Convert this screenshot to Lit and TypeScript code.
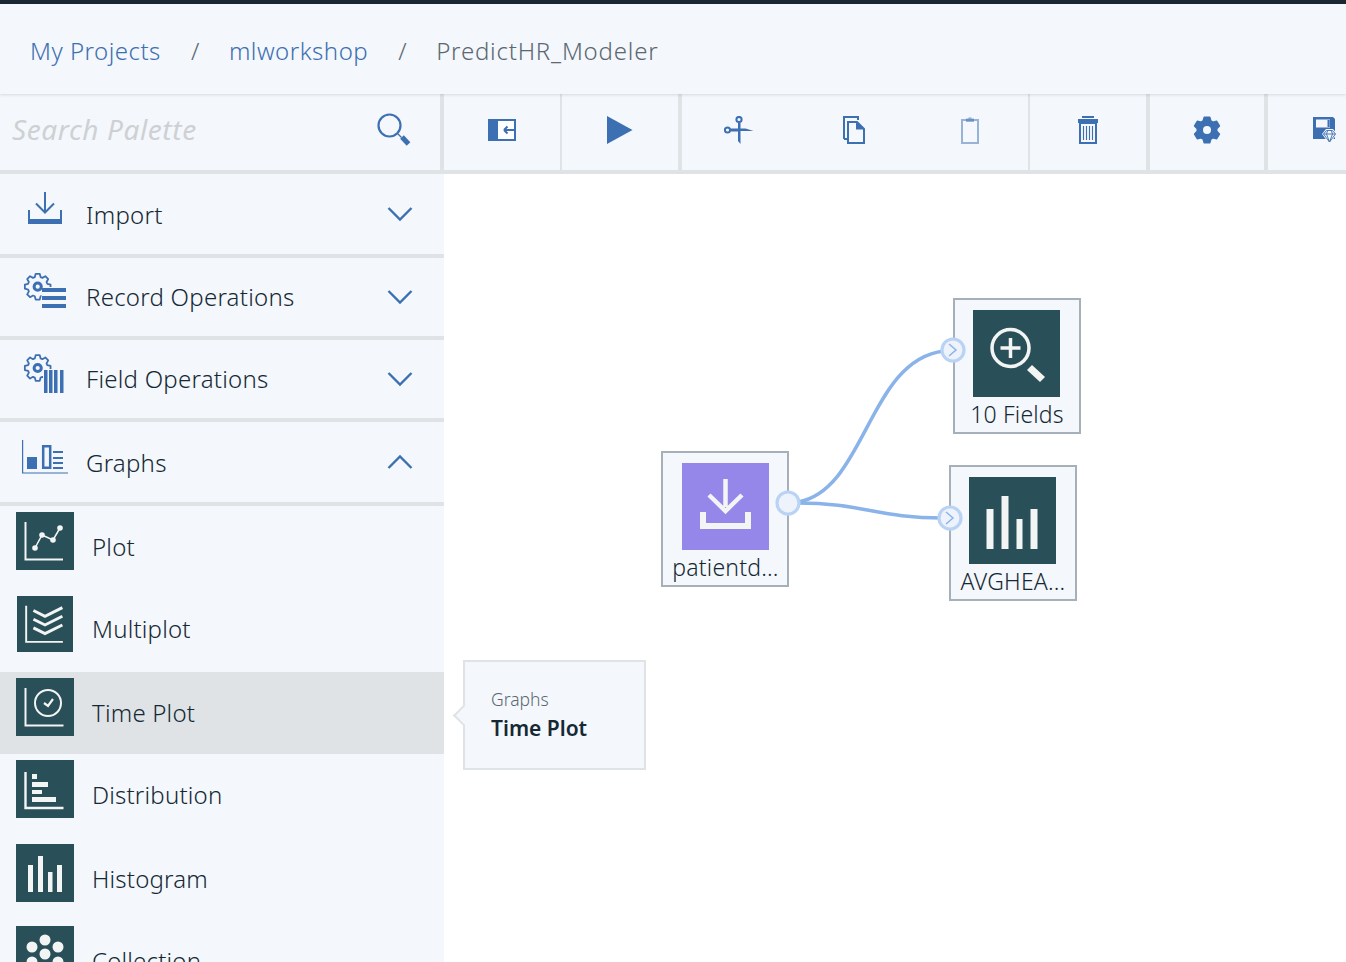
import { LitElement, html, svg, css } from 'lit';
import { customElement } from 'lit/decorators.js';

const BLUE = '#3d70b2';
const PAPER = '#f4f7fb';
const INK = '#f3f4f4';

/* gear outline as a path, used by the palette and the toolbar */
function gearPath(cx: number, cy: number, ro: number, ri: number, teeth: number) {
    const pts: string[] = [];
    const step = (Math.PI * 2) / teeth;
    for (let i = 0; i < teeth; i++) {
        const a = i * step - Math.PI / 2;
        const p = (r: number, d: number) =>
            `${(cx + r * Math.cos(a + d * step)).toFixed(2)} ${(cy + r * Math.sin(a + d * step)).toFixed(2)}`;
        pts.push(p(ri, -0.38), p(ro, -0.2), p(ro, 0.2), p(ri, 0.38));
    }
    return 'M' + pts.join('L') + 'Z';
}

const i = (w: number, h: number, body: unknown) =>
    html`<svg width=${w} height=${h} viewBox="0 0 ${w} ${h}" fill="none">${body}</svg>`;

const ICONS: Record<string, () => unknown> = {
    search: () => i(36, 36, svg`
        <circle cx="12.500" cy="13.500" r="11" stroke=${BLUE} stroke-width="2.200"/>
        <path d="M20.500 21.500l4 4" stroke=${BLUE} stroke-width="1.300"/>
        <path d="M25 25l6.500 7" stroke=${BLUE} stroke-width="5"/>`),
    collapse: () => i(28, 22, svg`
        <path d="M1 1h26v20H1z" fill="#fff" stroke=${BLUE} stroke-width="2"/>
        <path d="M0 0h10v22H0z" fill=${BLUE}/>
        <path d="M16 11h10M16 11l3.500-3.500M16 11l3.500 3.500" stroke=${BLUE} stroke-width="2"/>`),
    play: () => i(26, 28, svg`<path d="M0 0l25.500 14L0 28z" fill=${BLUE}/>`),
    cut: () => i(30, 28, svg`
        <circle cx="15" cy="3.500" r="2.600" stroke=${BLUE} stroke-width="2"/>
        <circle cx="3.500" cy="14" r="2.600" stroke=${BLUE} stroke-width="2"/>
        <path d="M14 6.500h2.500v6h5l8 2.500H16.500V28L14 25V15.500H6.500v-3H14z" fill=${BLUE}/>`),
    copy: () => i(22, 28, svg`
        <path d="M1 23V1h14v3" stroke=${BLUE} stroke-width="2"/>
        <path d="M1 23h3" stroke=${BLUE} stroke-width="2"/>
        <path d="M5 6h9l7 7v14H5z" fill=${PAPER} stroke=${BLUE} stroke-width="2"/>
        <path d="M13 5l9 8.500h-9z" fill=${BLUE}/>`),
    paste: () => i(18, 28, svg`
        <path d="M1 4h16v23H1z" stroke=${BLUE} stroke-width="2" opacity=".5"/>
        <path d="M5 6V2.500h2A2.300 2.300 0 0 1 11 2.500h2V6z" fill=${BLUE} opacity=".5"/>`),
    trash: () => i(20, 28, svg`
        <path d="M4 0h12v2H4z" fill=${BLUE}/>
        <path d="M0 3h20v4H0z" fill=${BLUE}/>
        <path d="M2 7h16v20H2z" fill=${PAPER} stroke=${BLUE} stroke-width="2"/>
        <path d="M5.500 10v14M8.500 10v14M11.500 10v14M14.500 10v14" stroke=${BLUE} stroke-width="1.100"/>`),
    gear: () => i(28, 28, svg`
        <path d=${gearPath(14, 14, 13, 9.800, 6)} fill=${BLUE} stroke=${BLUE} stroke-width="1.600" stroke-linejoin="round"/>
        <circle cx="14" cy="14" r="4" fill=${PAPER}/>`),
    save: () => i(24, 27, svg`
        <path d="M0 0h20l2 2v20H0z" fill=${BLUE}/>
        <path d="M3 2.500h14v8H3z" fill=${PAPER}/>
        <path d="M14.500 3h2.200v7h-2.200z" fill=${BLUE}/>
        <path d="M9 17l4-5h7l4 5-7.500 10z" fill=${PAPER}/>
        <path d="M10.500 17l3-3.500h6l3 3.500-6 8zM10.500 17h12M14.500 14l-1 3 3 8 3-8-1-3" stroke=${BLUE} stroke-width=".9"/>`),
    import: () => i(42, 38, svg`<g transform="translate(6 4)">
        <path d="M17 0v20M8 11.500l9 9 9-9" stroke=${BLUE} stroke-width="2"/>
        <path d="M1 18v10M33 18v10" stroke=${BLUE} stroke-width="2"/>
        <path d="M0 27h34v5H0z" fill=${BLUE}/></g>`),
    record: () => i(46, 40, svg`
        <path d=${gearPath(15.700, 14.700, 13, 10, 8)} stroke=${BLUE} stroke-width="1.800" stroke-linejoin="round"/>
        <path d="M19.500 15h25v23h-25z" fill=${PAPER}/>
        <circle cx="15.700" cy="14.700" r="3.600" stroke=${BLUE} stroke-width="3"/>
        <path d="M20 16h24v4H20zM20 24h24v4H20zM20 32h24v4H20z" fill=${BLUE}/>`),
    field: () => i(46, 42, svg`
        <path d=${gearPath(15.700, 14, 13, 10, 8)} stroke=${BLUE} stroke-width="1.800" stroke-linejoin="round"/>
        <path d="M21 15h22v25H21z" fill=${PAPER}/>
        <circle cx="15.700" cy="14" r="3.600" stroke=${BLUE} stroke-width="3"/>
        <path d="M22 16h3.500v23H22zM27 16h3.500v23H27zM32 16h3.500v23H32zM38 16h3.500v23H38z" fill=${BLUE}/>`),
    graphs: () => i(48, 40, svg`
        <path d="M.6 4v33H46" stroke=${BLUE} stroke-width="1.200"/>
        <path d="M5 21h10v12H5z" fill=${BLUE}/>
        <path d="M21.200 10.200h7v21.600h-7z" stroke=${BLUE} stroke-width="2.500"/>
        <path d="M31 16h10M31 22h10M31 27h10M31 32h10" stroke=${BLUE} stroke-width="1.800"/>`),
    plot: () => svg`
        <path d="M9.500 10v37.500h37.500" stroke=${INK} stroke-width="2"/>
        <path d="M19 36l7-13 11 5 7-12" stroke=${INK} stroke-width="1.500"/>
        <circle cx="19" cy="36" r="2.800" fill=${INK}/><circle cx="26" cy="23" r="2.800" fill=${INK}/>
        <circle cx="37" cy="28" r="2.800" fill=${INK}/><circle cx="44" cy="16" r="2.800" fill=${INK}/>`,
    multiplot: () => svg`
        <path d="M9.500 10v37.500h38" stroke=${INK} stroke-width="2"/>
        <path d="M17 15l12 6 18-9M17 24l12 6 18-9M17 33l12 6 18-9" stroke=${INK} stroke-width="3"/>`,
    timeplot: () => svg`
        <path d="M9.500 10v37.500h38" stroke=${INK} stroke-width="2"/>
        <circle cx="32" cy="25" r="13" stroke=${INK} stroke-width="2"/>
        <path d="M28 25l4 3 5-7" stroke=${INK} stroke-width="2.200"/>`,
    distribution: () => svg`
        <path d="M9.500 12v36h38" stroke=${INK} stroke-width="2.400"/>
        <path d="M16 14h5v5h-5zM16 22h16v5H16zM16 30h10v4H16zM16 37h24v5H16z" fill=${INK}/>`,
    histogram: () => svg`
        <path d="M12 21h5v27h-5zM22 12h5v36h-5zM32 28h4.500v20H32zM41 21h5v27h-5z" fill=${INK}/>`,
    collection: () => svg`
        <circle cx="29" cy="14" r="5.500" fill=${INK}/><circle cx="16" cy="21" r="5.500" fill=${INK}/>
        <circle cx="42" cy="21" r="5.500" fill=${INK}/><circle cx="29" cy="28" r="5.500" fill=${INK}/>
        <circle cx="16" cy="36" r="5.500" fill=${INK}/><circle cx="42" cy="36" r="5.500" fill=${INK}/>
        <circle cx="29" cy="43" r="5.500" fill=${INK}/>`,
};

const NODE_ICONS: Record<string, () => unknown> = {
    import: () => svg`
        <path d="M43.500 16v28M27 32l16.500 16L60 32" stroke=${INK} stroke-width="4.500" fill="none"/>
        <path d="M18 49h6v11h39V49h6v17H18z" fill=${INK}/>`,
    zoom: () => svg`
        <circle cx="37.500" cy="38" r="18.500" stroke=${INK} stroke-width="3.500" fill="none"/>
        <path d="M37.500 28v20M27.500 38h20" stroke=${INK} stroke-width="3.500"/>
        <path d="M54 60l5-5 13 12-5 5z" fill=${INK}/>`,
    bars: () => svg`
        <path d="M17.500 32h7v40h-7zM32.500 19h7v53h-7zM47.500 42h6v30h-6zM61.500 32h7v40h-7z" fill=${INK}/>`,
};

const TOOLS = [
    { icons: ['collapse'], thick: false },
    { icons: ['play'], thick: true },
    { icons: ['cut', 'copy', 'paste'], thick: false },
    { icons: ['trash'], thick: true },
    { icons: ['gear'], thick: true },
    { icons: ['save'], thick: false },
];

const CATEGORIES = [
    { label: 'Import', icon: 'import', open: false, tall: true },
    { label: 'Record Operations', icon: 'record', open: false, tall: false },
    { label: 'Field Operations', icon: 'field', open: false, tall: false },
    { label: 'Graphs', icon: 'graphs', open: true, tall: true },
];

const ITEMS = [
    { label: 'Plot', icon: 'plot' },
    { label: 'Multiplot', icon: 'multiplot', small: true },
    { label: 'Time Plot', icon: 'timeplot', active: true },
    { label: 'Distribution', icon: 'distribution' },
    { label: 'Histogram', icon: 'histogram' },
    { label: 'Collection', icon: 'collection' },
];

/* x/y are the node's place on the canvas, relative to the page */
const NODES = [
    { x: 661, y: 451, label: 'patientd...', icon: 'import', cls: 'source' },
    { x: 953, y: 298, label: '10 Fields', icon: 'zoom', cls: '' },
    { x: 949, y: 465, label: 'AVGHEA...', icon: 'bars', cls: '' },
];

@customElement('app-root')
export class AppRoot extends LitElement {
    static styles = css`
        :host {
            display: block;
            height: 100vh;
            overflow: hidden;
            background: #fff;
            color: #152935;
            font-family: 'Noto Sans', 'Liberation Sans', sans-serif;
        }
        .shell { position: relative; height: 962px; overflow: hidden; }
        .topline { height: 4px; background: #1b2834; }
        .crumbs {
            height: 90px;
            box-sizing: border-box;
            padding: 2px 0 0 30px;
            display: flex;
            align-items: center;
            gap: 30px;
            background: #f4f7fb;
            font-size: 24px;
            font-weight: 300;
            letter-spacing: .5px;
            position: relative;
            z-index: 2;
            box-shadow: 0 1px 3px rgba(0, 0, 0, .12);
        }
        .crumbs a { color: #3d70b2; }
        .crumbs .sep { color: #5a6872; width: 8px; text-align: center; }
        .crumbs .here { color: #5a6872; letter-spacing: .8px; }
        .main { display: flex; height: 868px; }
        .palette { width: 444px; flex: none; background: #f4f7fb; }
        .search {
            height: 80px;
            box-sizing: border-box;
            display: flex;
            align-items: center;
            justify-content: space-between;
            padding: 0 27px 4px 12px;
            border-right: 4px solid #dfe3e6;
            border-bottom: 4px solid #dfe3e6;
        }
        .search span { font-style: italic; font-size: 28px; letter-spacing: .6px; color: #cdd1d4; margin-top: -2px; }
        .search svg { display: block; }
        .cat {
            height: 78px;
            border-bottom: 4px solid #dfe3e6;
            display: flex;
            align-items: center;
            position: relative;
            padding-left: 86px;
            font-size: 24px;
            font-weight: 300;
            letter-spacing: .25px;
        }
        .cat.tall { height: 80px; }
        .cat .cat-icon { position: absolute; left: 22px; top: 14px; }
        .cat span { margin-top: -1px; }
        .cat.tall span { margin-top: 1px; }
        .chev { position: absolute; left: 387px; top: 50%; margin-top: -8px; }
        .item {
            height: 82px;
            display: flex;
            align-items: center;
            padding-left: 16px;
            gap: 18px;
            font-size: 24px;
            font-weight: 300;
            letter-spacing: .2px;
        }
        .item:nth-child(even) { margin-bottom: 2px; }
        .item.active { background: #dfe3e6; }
        .thumb { align-self: flex-start; margin-top: 6px; width: 58px; height: 58px; background: #294f58; display: block; }
        .item.small .thumb { width: 56px; height: 56px; margin: 8px 1px 0; }
        .item span { margin-top: -1px; }
        .right { flex: 1; min-width: 0; position: relative; }
        .tools {
            height: 80px;
            box-sizing: border-box;
            display: grid;
            grid-template-columns: 118px 120px 348px 120px 118px 116px;
            background: #f4f7fb;
            border-bottom: 4px solid #dfe3e6;
        }
        .group {
            display: grid;
            grid-auto-flow: column;
            grid-auto-columns: 1fr;
            border-right: 2px solid #dfe3e6;
        }
        .group.thick { border-right-width: 4px; }
        .group:nth-child(3) { grid-template-columns: 114px 116px 1fr; }
        .tool { display: flex; align-items: center; justify-content: center; padding-bottom: 4px; }
        .tool svg { display: block; }
        .wires { position: absolute; left: 0; top: 0; width: 1346px; height: 962px; pointer-events: none; }
        .node {
            position: absolute;
            width: 128px;
            height: 136px;
            box-sizing: border-box;
            background: #f4f7fb;
            border: 2px solid #a5b0b8;
            display: flex;
            flex-direction: column;
            align-items: flex-start;
            padding: 10px 0 0 18px;
            font-size: 23px;
            font-weight: 300;
            line-height: 34px;
        }
        .node.source { padding-left: 19px; }
        .node span { align-self: center; margin-left: -18px; letter-spacing: .2px; white-space: nowrap; }
        .node svg { display: block; background: #294f58; flex: none; }
        .node.source svg { background: #9586ea; }
        .tip {
            position: absolute;
            left: 463px;
            top: 660px;
            width: 183px;
            height: 110px;
            box-sizing: border-box;
            border: 2px solid #dfe3e6;
            background: #f4f7fb;
            padding: 25px 0 0 26px;
        }
        .tip::before {
            content: '';
            position: absolute;
            left: -9px;
            top: 46px;
            width: 15px;
            height: 15px;
            background: #f4f7fb;
            border-left: 2px solid #dfe3e6;
            border-bottom: 2px solid #dfe3e6;
            transform: rotate(45deg);
            box-sizing: border-box;
        }
        .tip .kind { font-size: 17.500px; line-height: 25px; color: #5a6872; font-weight: 300; }
        .tip .name { font-size: 21px; line-height: 32px; font-weight: 600; color: #152935; }
    `;

    render() {
        return html`
            <div class="shell">
                <div class="topline"></div>
                <div class="crumbs">
                    <a>My Projects</a><span class="sep">/</span>
                    <a>mlworkshop</a><span class="sep">/</span>
                    <span class="here">PredictHR_Modeler</span>
                </div>
                <div class="main">
                    <div class="palette">
                        <div class="search"><span>Search Palette</span>${ICONS.search()}</div>
                        ${CATEGORIES.map((c) => this._renderCategory(c))}
                        <div>${ITEMS.map((it) => this._renderItem(it))}</div>
                    </div>
                    <div class="right">
                        <div class="tools">
                            ${TOOLS.map((g) => html`
                                <div class="group ${g.thick ? 'thick' : ''}">
                                    ${g.icons.map((t) => html`<div class="tool">${ICONS[t]()}</div>`)}
                                </div>`)}
                        </div>
                    </div>
                </div>
                ${this._renderWires()}
                ${NODES.map((n) => html`
                    <div class="node ${n.cls}" style="left:${n.x}px;top:${n.y}px">
                        ${i(87, 87, NODE_ICONS[n.icon]())}
                        <span>${n.label}</span>
                    </div>`)}
                ${this._renderPorts()}
                <div class="tip">
                    <div class="kind">Graphs</div>
                    <div class="name">Time Plot</div>
                </div>
            </div>
        `;
    }

    _renderCategory(c: { label: string; icon: string; open: boolean; tall: boolean }) {
        return html`
            <div class="cat ${c.tall ? 'tall' : ''}">
                <div class="cat-icon">${ICONS[c.icon]()}</div>
                <span>${c.label}</span>
                <svg class="chev" width="26" height="16" viewBox="0 0 26 16" fill="none">
                    <path d=${c.open ? 'M1.500 14L13 2.500 24.500 14' : 'M1.500 2L13 13.500 24.500 2'} stroke=${BLUE} stroke-width="2.400"/>
                </svg>
            </div>`;
    }

    _renderItem(it: { label: string; icon: string; small?: boolean; active?: boolean }) {
        return html`
            <div class="item ${it.small ? 'small' : ''} ${it.active ? 'active' : ''}">
                <svg class="thumb" viewBox="0 0 58 58" fill="none">${ICONS[it.icon]()}</svg>
                <span>${it.label}</span>
            </div>`;
    }

    _renderWires() {
        return html`
            <svg class="wires" viewBox="0 0 1346 962" fill="none">
                <path d="M798 502C866 490 868 360 944 351" stroke="#8ab3ea" stroke-width="3.500"/>
                <path d="M798 503C860 503 880 518 942 518" stroke="#8ab3ea" stroke-width="3.500"/>
            </svg>`;
    }

    _renderPorts() {
        return html`
            <svg class="wires" viewBox="0 0 1346 962" fill="none">
                <circle cx="788" cy="503" r="11" fill="#eef3fb" stroke="#b9d3f5" stroke-width="3.200"/>
                <circle cx="953" cy="350" r="11" fill="#eef3fb" stroke="#b9d3f5" stroke-width="3.200"/>
                <circle cx="950" cy="518" r="11" fill="#eef3fb" stroke="#b9d3f5" stroke-width="3.200"/>
                <path d="M949 344l7 6-7 6" stroke="#8ab3ea" stroke-width="1.500"/>
                <path d="M946 512l7 6-7 6" stroke="#8ab3ea" stroke-width="1.500"/>
            </svg>`;
    }
}
